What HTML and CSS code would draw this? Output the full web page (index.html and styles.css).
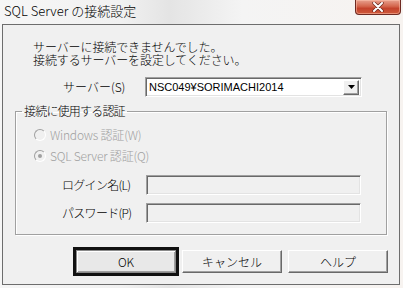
FILE: index.html
```html
<!DOCTYPE html>
<html>
<head>
  <meta charset="utf-8">
  <link rel="stylesheet" href="styles.css">
</head>
<body>
  <div class="titlebar">
    <div class="title">SQL Server の接続設定</div>
    <div class="close-btn">
      <svg width="14" height="10" viewBox="0 0 14 10">
        <path d="M3 1 L11 9 M11 1 L3 9" stroke="#6b2a20" stroke-width="3.4" stroke-linecap="round"/>
        <path d="M3 1 L11 9 M11 1 L3 9" stroke="#ffffff" stroke-width="2" stroke-linecap="round"/>
      </svg>
    </div>
  </div>

  <div class="client">
    <div class="message">
      <div>サーバーに接続できませんでした。</div>
      <div>接続するサーバーを設定してください。</div>
    </div>

    <div class="server-row">
      <div class="label">サーバー(S)</div>
      <div class="combo">
        <span class="combo-text">NSC049¥SORIMACHI2014</span>
        <span class="combo-arrow">
          <svg width="7" height="4" viewBox="0 0 7 4"><path d="M0 0 H7 L3.5 4 Z" fill="#000"/></svg>
        </span>
      </div>
    </div>

    <fieldset class="group">
      <legend>接続に使用する認証</legend>
      <div class="radio-row">
        <span class="radio"></span>
        <span class="radio-label">Windows 認証(W)</span>
      </div>
      <div class="radio-row">
        <span class="radio checked"></span>
        <span class="radio-label">SQL Server 認証(Q)</span>
      </div>
      <div class="field-row login">
        <div class="label">ログイン名(L)</div>
        <div class="field"></div>
      </div>
      <div class="field-row">
        <div class="label">パスワード(P)</div>
        <div class="field"></div>
      </div>
    </fieldset>

    <div class="buttons">
      <div class="btn default">OK</div>
      <div class="btn">キャンセル</div>
      <div class="btn">ヘルプ</div>
    </div>
  </div>
</body>
</html>
```

FILE: styles.css
```css
* {
  margin: 0;
  padding: 0;
  box-sizing: border-box;
}

body {
  width: 403px;
  height: 288px;
  overflow: hidden;
  font-family: "Noto Sans CJK JP", "Liberation Sans", sans-serif;
  font-size: 12px;
  font-weight: 300;
  color: #000;
  background: linear-gradient(90deg, #f6f6f6 0%, #f1f1f1 30%, #e4e4e4 42%, #f4f4f4 60%, #f7f3f0 100%);
}

.titlebar {
  height: 24px;
  display: flex;
  align-items: flex-start;
}

.title {
  padding: 3px 0 0 4px;
  font-size: 13px;
  line-height: 16px;
  color: #000;
}

.close-btn {
  margin-left: auto;
  margin-right: 2px;
  width: 46px;
  height: 15px;
  border: 1px solid #6e2a22;
  border-top: none;
  border-radius: 0 0 4px 4px;
  background: linear-gradient(180deg, #e8a18e 0%, #d4664d 45%, #c4432c 60%, #cf5a3c 100%);
  box-shadow: inset 0 0 0 1px rgba(255, 200, 180, 0.5);
  display: flex;
  align-items: center;
  justify-content: center;
}

.client {
  margin-left: 2px;
  width: 398px;
  height: 261px;
  border: 1px solid #6d6d6d;
  background: #f0f0f0;
}

.message {
  padding: 15px 0 0 30px;
  line-height: 13px;
  letter-spacing: -0.1px;
}

.server-row {
  margin-top: 11px;
  height: 20px;
  display: flex;
  align-items: center;
  padding-left: 60px;
}

.label {
  width: 82px;
  line-height: 12px;
}

.combo {
  width: 217px;
  height: 20px;
  background: #fff;
  border: 1px solid;
  border-color: #a0a0a0 #fff #fff #a0a0a0;
  box-shadow: inset 1px 1px 0 #696969, inset -1px -1px 0 #e3e3e3;
  display: flex;
  align-items: center;
  padding: 0 2px 0 3px;
}

.combo-text {
  font-family: "Liberation Sans", sans-serif;
  font-size: 11px;
  flex: 1;
}

.combo-arrow {
  width: 16px;
  height: 15px;
  background: #f0f0f0;
  border: 1px solid;
  border-color: #fff #696969 #696969 #fff;
  box-shadow: inset -1px -1px 0 #a0a0a0;
  display: flex;
  align-items: center;
  justify-content: center;
}

.group {
  margin: 8px 0 0 12px;
  width: 372px;
  border: 1px solid #a0a0a0;
  box-shadow: 1px 1px 0 #fff, inset 1px 1px 0 #fff;
  padding: 0 0 11px 0;
}

.group legend {
  margin-left: 6px;
  padding: 0 2px;
  line-height: 12px;
  letter-spacing: -0.8px;
}

.radio-row {
  height: 20px;
  display: flex;
  align-items: center;
  padding-left: 18px;
  color: #a0a0a0;
}

.radio-row + .radio-row {
  margin-top: 1px;
}

.group legend + .radio-row {
  margin-top: 8px;
}

.radio {
  width: 12px;
  height: 12px;
  border-radius: 50%;
  border: 1px solid;
  border-color: #a0a0a0 #fff #fff #a0a0a0;
  background: #f0f0f0;
  margin-right: 4px;
  display: flex;
  align-items: center;
  justify-content: center;
}

.radio.checked::after {
  content: "";
  width: 4px;
  height: 4px;
  border-radius: 50%;
  background: #a0a0a0;
}

.radio-label {
  line-height: 12px;
  letter-spacing: -0.2px;
}

.field-row {
  display: flex;
  align-items: center;
  padding-left: 46px;
  height: 20px;
  margin-top: 8px;
}

.field-row.login {
  margin-top: 9px;
}

.field-row .label {
  width: 84px;
  letter-spacing: -0.7px;
}

.field {
  width: 215px;
  height: 20px;
  background: #f0f0f0;
  border: 1px solid;
  border-color: #a0a0a0 #fff #fff #a0a0a0;
  box-shadow: inset 1px 1px 0 #696969, inset -1px -1px 0 #e3e3e3;
}

.buttons {
  margin-top: 15px;
  display: flex;
  justify-content: flex-end;
  gap: 6px;
  padding-right: 11px;
}

.btn {
  width: 100px;
  height: 23px;
  border: 1px solid;
  border-color: #fff #696969 #696969 #fff;
  box-shadow: inset -1px -1px 0 #a0a0a0;
  background: #f0f0f0;
  display: flex;
  align-items: center;
  justify-content: center;
  line-height: 12px;
}

.btn.default {
  outline: 3px solid #111;
  background: #e8e8e8;
  border-color: #8a8a8a;
  box-shadow: inset 1px 1px 0 #fff, inset -1px -1px 0 #a0a0a0;
}
```
